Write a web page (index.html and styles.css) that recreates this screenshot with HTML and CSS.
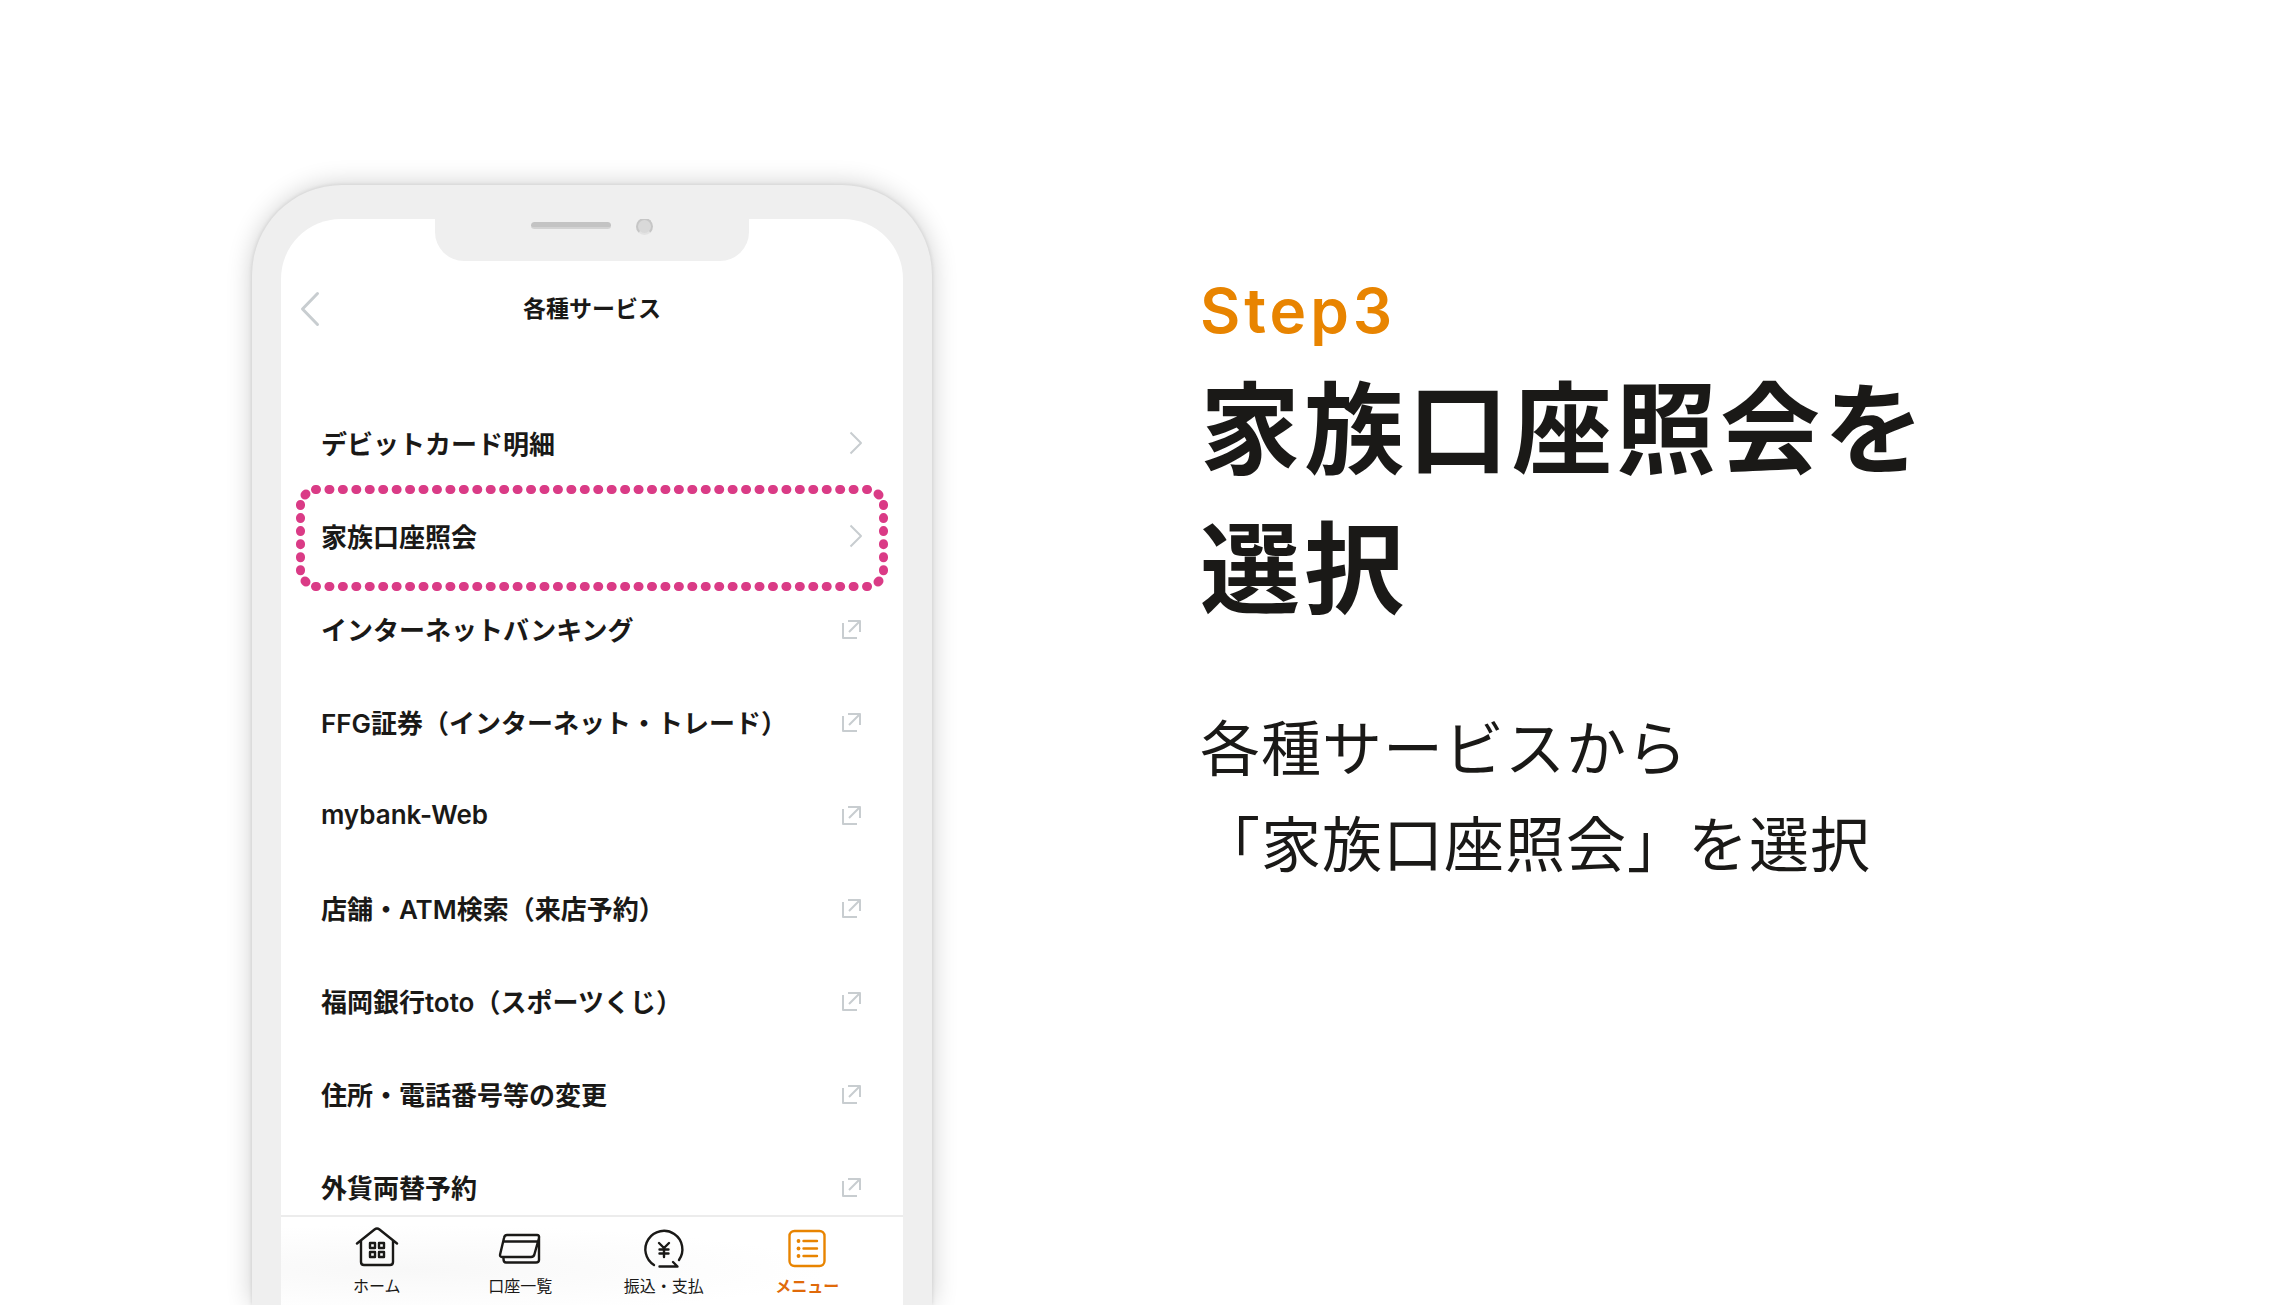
FILE: index.html
```html
<!DOCTYPE html>
<html lang="ja">
<head>
<meta charset="utf-8">
<meta name="viewport" content="width=device-width, initial-scale=1">
<title>Step3 家族口座照会を選択</title>
<link rel="stylesheet" href="styles.css">
</head>
<body>
<svg class="sprite" aria-hidden="true">
  <symbol id="chevron" viewBox="0 0 24 24"><path d="M11.500 1.500 22 12 11.500 22.500"/></symbol>
  <symbol id="external" viewBox="0 0 24 24"><path d="M4 6V21H18M9 4H21V15M21 4 10 15"/></symbol>
</svg>
<main class="stage">
  <section class="phone" aria-label="アプリ画面">
    <div class="screen">
      <div class="notch"><span class="speaker"></span><span class="camera"></span></div>
      <header class="app-bar">
        <button class="back" type="button" aria-label="戻る"><svg viewBox="0 0 20 36"><path d="M17.500 2.500 2.500 18 17.500 33.500"/></svg></button>
        <h2 class="app-title">各種サービス</h2>
      </header>
      <ul class="services">
        <li><a class="service" href="#">デビットカード明細<svg class="mark"><use href="#chevron"/></svg></a></li>
        <li><a class="service selected" href="#">家族口座照会<svg class="mark"><use href="#chevron"/></svg>
          <svg class="frame" viewBox="0 0 592 106" aria-hidden="true">
            <g class="frame-row"><path d="M19.500 4.500H574"/><path d="M19.500 101.500H574"/></g>
            <g class="frame-side"><path d="M4.500 19.500V88"/><path d="M587.500 19.500V88"/></g>
            <path d="M9 10 10 9M583 10 582 9M9 96 10 97M583 96 582 97"/>
          </svg></a></li>
        <li><a class="service" href="#">インターネットバンキング<svg class="mark"><use href="#external"/></svg></a></li>
        <li><a class="service" href="#">FFG証券（インターネット・トレード）<svg class="mark"><use href="#external"/></svg></a></li>
        <li><a class="service" href="#">mybank-Web<svg class="mark"><use href="#external"/></svg></a></li>
        <li><a class="service" href="#">店舗・ATM検索（来店予約）<svg class="mark"><use href="#external"/></svg></a></li>
        <li><a class="service" href="#">福岡銀行toto（スポーツくじ）<svg class="mark"><use href="#external"/></svg></a></li>
        <li><a class="service" href="#">住所・電話番号等の変更<svg class="mark"><use href="#external"/></svg></a></li>
        <li><a class="service" href="#">外貨両替予約<svg class="mark"><use href="#external"/></svg></a></li>
      </ul>
      <nav class="tabs">
        <a class="tab" href="#"><svg class="tab-icon" viewBox="0 0 44 44">
          <path d="M2 17.500 19.500 3.500Q22 1.500 24.500 3.500L42 17.500M6 15V36Q6 39 9 39H35Q38 39 38 36V15"/>
          <path d="M15 17H20V22H15ZM24 17H29V22H24ZM15 26H20V31H15ZM24 26H29V31H24Z"/></svg>ホーム</a>
        <a class="tab" href="#"><svg class="tab-icon" viewBox="0 0 44 44">
          <path d="M9 9H39Q41.500 9 41 12L36.500 28Q36 31 33 31H4Q1.500 31 2.200 28L6 12Q6.500 9 9 9ZM5.500 15.500H40M41 11V34Q41 36.500 38 36.500H8Q5.500 36.500 5.500 33V31"/></svg>口座一覧</a>
        <a class="tab" href="#"><svg class="tab-icon" viewBox="0 0 44 44">
          <path d="M12 39A18.500 18.500 0 1 1 37 34M17.500 40.500H35.500L31 36"/>
          <path d="M17 17 22 22 27 17M22 22V31M17.500 23.500H26.500M17.500 27.500H26.500"/></svg>振込・支払</a>
        <a class="tab current" href="#" aria-current="page"><svg class="tab-icon" viewBox="0 0 44 44">
          <rect x="4.500" y="5" width="35" height="35" rx="5"/>
          <path d="M18.500 15H32M18.500 22.500H32M18.500 30H32"/>
          <g class="dots"><circle cx="13.500" cy="15" r="1.900"/><circle cx="13.500" cy="22.500" r="1.900"/><circle cx="13.500" cy="30" r="1.900"/></g></svg>メニュー</a>
      </nav>
    </div>
  </section>
  <section class="guide">
    <p class="step">Step3</p>
    <h1 class="headline">家族口座照会を<br>選択</h1>
    <p class="lead">各種サービスから<br>「家族口座照会」を選択</p>
  </section>
</main>
</body>
</html>
```
FILE: styles.css
```css
* { box-sizing: border-box; }

body {
  margin: 0;
  background: #fff;
  color: #1a1917;
  font-family: Inter, "Noto Sans CJK JP", sans-serif;
}

h1, h2, p, ul { margin: 0; padding: 0; }
ul { list-style: none; }
a { color: inherit; text-decoration: none; }
svg { fill: none; stroke: currentColor; stroke-linecap: round; stroke-linejoin: round; }

.sprite { display: none; }

.stage {
  display: grid;
  grid-template-columns: minmax(0, 680px) minmax(0, 1fr);
  column-gap: 268px;
  height: 100vh;
  padding: 185px 11vw 0;
  overflow: hidden;
}

/* Phone */
.phone {
  display: flex;
  min-height: 0;
  padding: 34px 29px 0;
  border-radius: 90px 90px 0 0;
  background: #efefef;
  box-shadow: 0 0 4px rgba(0, 0, 0, .12), 0 0 26px rgba(0, 0, 0, .2);
}

.screen {
  display: flex;
  flex: 1;
  flex-direction: column;
  min-width: 0;
  overflow: hidden;
  border-radius: 60px 60px 0 0;
  background: #fff;
}

.notch {
  position: relative;
  flex: none;
  align-self: center;
  width: 314px;
  height: 42px;
  border-radius: 0 0 29px 29px;
  background: #efefef;
}

.speaker, .camera { position: absolute; background: #c3c3c3; }
.speaker { top: 3px; left: 96px; width: 80px; height: 7px; border-radius: 4px; border-bottom: 2px solid #d2d2d2; }
.camera { top: -1px; left: 201px; width: 17px; height: 17px; border-radius: 50%; border: 2px solid #c6c6c6; border-bottom-color: #e2e2e2; background: #d9d9d9; }

.app-bar {
  display: grid;
  flex: none;
  grid-template-columns: 40px 1fr 40px;
  align-items: center;
  height: 96px;
  margin-bottom: 39px;
  padding: 0 19px;
}

.back { padding: 0; border: 0; background: none; color: #c8cdd0; cursor: pointer; }
.back svg { display: block; width: 20px; height: 36px; stroke-width: 3; }
.app-title { font-size: 23px; font-weight: 600; line-height: 32px; text-align: center; }

.services { flex: 1; min-height: 0; overflow: hidden; }

.service {
  position: relative;
  display: flex;
  align-items: center;
  justify-content: space-between;
  height: 93px;
  padding: 0 40px;
  font-size: 26px;
  font-weight: 600;
}

.mark { flex: none; width: 24px; height: 24px; color: #c8cdd0; stroke-width: 2; stroke-linecap: butt; }

.frame {
  position: absolute;
  top: -4px;
  left: 15px;
  width: 592px;
  height: 106px;
  color: #da3b86;
  stroke-width: 9;
}
.frame-row { stroke-dasharray: 1 12.440; }
.frame-side { stroke-dasharray: 1 12.060; }

.tabs {
  display: grid;
  flex: none;
  grid-template-columns: repeat(4, 1fr);
  height: 90px;
  padding: 0 24px;
  border-top: 2px solid #ececec;
  background: radial-gradient(ellipse at 20% 60%, #f8f8f8, #fff 60%);
}
.tab {
  display: flex;
  flex-direction: column;
  align-items: center;
  gap: 4px;
  padding-top: 9px;
  font-size: 16px;
  line-height: 24px;
}
.tab-icon { width: 44px; height: 44px; stroke-width: 2.400; }
.current { color: #e06a0a; font-weight: 700; }
.current .tab-icon { color: #e88400; }
.dots { fill: currentColor; stroke: none; }

/* Guide text */
.guide { padding-top: 82px; white-space: nowrap; }
.step { color: #e88400; font-size: 62px; font-weight: 600; line-height: 88px; letter-spacing: 4px; }
.headline { margin-top: 5px; font-size: 100px; font-weight: 700; line-height: 140px; letter-spacing: 4px; }
.lead { margin-top: 61px; font-size: 60px; line-height: 96px; letter-spacing: 1px; }
```
